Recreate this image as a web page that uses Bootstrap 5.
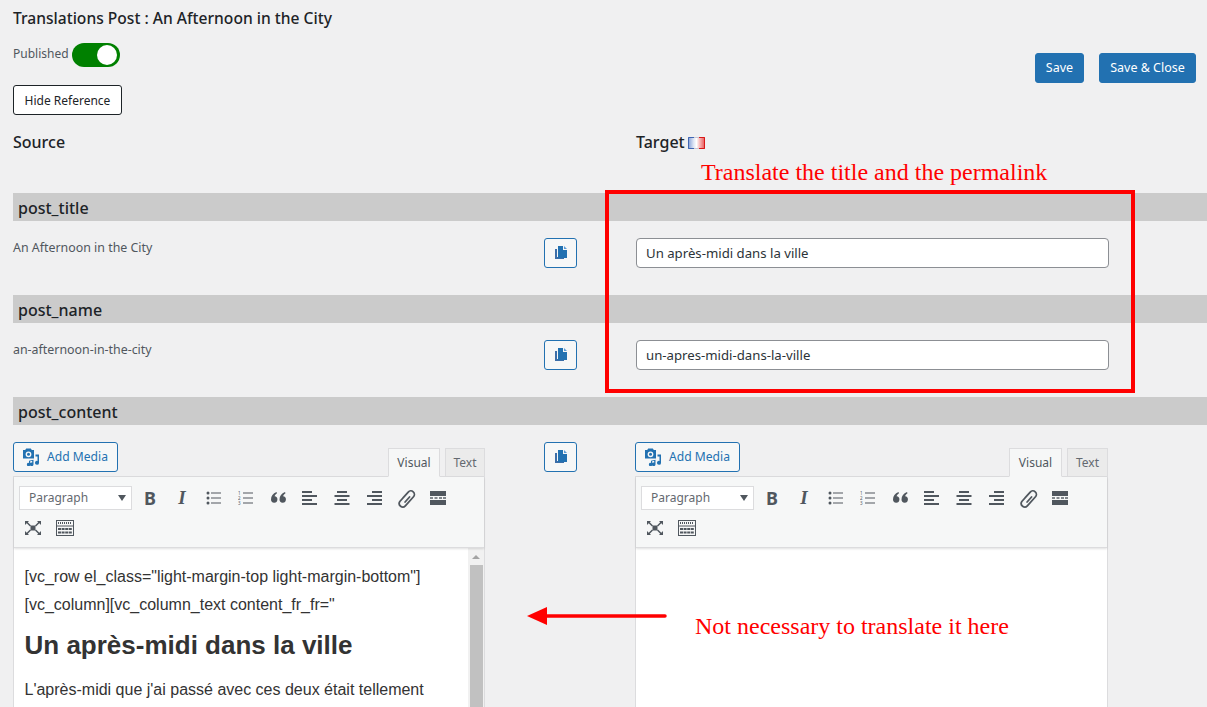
<!DOCTYPE html>
<html lang="en">
<head>
    <meta charset="UTF-8">
    <meta name="viewport" content="width=device-width, initial-scale=1.0">
    <title>Translations Post</title>
    <link href="https://cdn.jsdelivr.net/npm/bootstrap@5.3.0/dist/css/bootstrap.min.css" rel="stylesheet">
    <style>
        html, body { height: 100%; overflow: hidden; }
        body {
            background: #f0f0f1;
            color: #1d2327;
            font-family: "Noto Sans", "Open Sans", sans-serif;
            font-size: 13px;
        }
        .page-root { position: relative; height: 707px; overflow: hidden; padding: 8px 0 0 13px; }
        .page-title { font-size: 15.6px; font-weight: 500; line-height: 20px; margin: 0; }
        .pub-row { margin-top: 15px; height: 24px; color: #50575e; font-size: 12px; }
        .pub-label { margin-top: -2px; }
        .pub-toggle { width: 48px; height: 24px; padding: 2px 3px; margin-left: 3px; border-radius: 12px; background: #008000; }
        .pub-knob { width: 20px; height: 20px; border-radius: 50%; background: #fff; }
        .btn-hide { margin-top: 18px; width: 109px; height: 30px; padding: 1px 0 0; font-size: 12px; color: #1d2327; background: #fff; border: 1px solid #1d2327; border-radius: 3px; }
        .save-group { margin: 45px 11px 0 0; gap: 15px; }
        .btn-wp { height: 30px; padding: 1px 0 0; font-size: 12.5px; color: #fff; background: #2271b1; border: 1px solid #2271b1; border-radius: 3px; }
        .btn-save { width: 49px; }
        .btn-save-close { width: 97px; }
        .col-heads { margin-top: 15px; height: 24px; font-size: 16px; font-weight: 500; line-height: 24px; }
        .col-src { width: 531px; flex: none; }
        .col-copy { width: 92px; flex: none; }
        .col-tgt { width: 473px; flex: none; }
        .flag-icon { margin-left: 3px; vertical-align: -1px; }
        .field-bar { height: 28px; padding-left: 5px; background: #cbcbcb; font-size: 16px; font-weight: 500; line-height: 30px; }
        .bar-first { margin-top: 39px; }
        .field-row { height: 74px; padding-top: 17px; }
        .src-text { padding-top: 1px; font-size: 12.4px; line-height: 18px; color: #50575e; }
        .btn-copy { width: 33px; height: 30px; padding: 0; background: #f6f7f7; border: 1px solid #2271b1; border-radius: 3px; }
        .tgt-input { height: 30px; padding: 0 9px; font-size: 13.2px; color: #2c3338; border: 1px solid #8c8f94; border-radius: 4px; }
        .editor-row { padding-top: 17px; }
        .editor-head { height: 34px; }
        .btn-media { width: 105px; height: 30px; padding: 0 1px 0 0; gap: 7px; font-size: 12.1px; color: #2271b1; background: #f6f7f7; border: 1px solid #2271b1; border-radius: 3px; }
        .media-label { padding-top: 1px; }
        .pane-left { width: 472px; }
        .pane-right { width: 473px; margin-left: -1px; }
        .tab-visual, .tab-text { height: 29px; font-size: 12px; line-height: 28px; text-align: center; color: #50575e; border: 1px solid #dcdcde; }
        .tab-visual { width: 52px; background: #f6f7f7; border-bottom-color: #f6f7f7; position: relative; z-index: 1; margin-bottom: -1px; }
        .tab-text { width: 40px; margin-left: 5px; background: #ebebeb; color: #646970; margin-bottom: -1px; }
        .pane-right .tab-visual { width: 53px; }
        .pane-right .tab-text { width: 41px; }
        .editor-wrap { border: 1px solid #dcdcde; }
        .mce-bar { height: 71px; background: #f6f7f7; padding: 9px 0 0 5px; border-bottom: 1px solid #dcdcde; box-shadow: 0 1px 2px rgba(0, 0, 0, .12); position: relative; }
        .mce-select { width: 113px; height: 24px; padding: 0 5px 0 9px; font-size: 12px; color: #646970; background: #fff; border: 1px solid #dcdcde; }
        .mce-caret { width: 0; height: 0; border-left: 4px solid transparent; border-right: 4px solid transparent; border-top: 6px solid #50575e; }
        .mce-row { height: 30px; margin-top: -3px; }
        .mce-row2 { margin-left: -2px; margin-top: 0; }
        .mce-ico { width: 32px; height: 30px; flex: none; color: #50575e; }
        .gap-sel { width: 2px; flex: none; }
        .ico-b { font: 700 18px "Noto Sans", sans-serif; }
        .ico-i { font: italic 700 19px "Liberation Serif", serif; }
        .editor-body { height: 170px; background: #fff; overflow: hidden; }
        .body-text { width: 455px; padding: 15px 0 0 10.5px; font-family: "Liberation Sans", Arial, sans-serif; font-size: 16px; line-height: 28px; color: #333; }
        .body-text p { margin: 0 0 13px; }
        .body-text .intro-code { margin-bottom: 7px; }
        .body-text h2 { margin: 0 0 13px; padding-top: 1px; font-family: "Liberation Sans", Arial, sans-serif; font-size: 26px; font-weight: 700; line-height: 36px; color: #333; }
        .scroll-track { width: 16px; background: #f1f1f1; }
        .scroll-up { width: 0; height: 0; margin: 7px auto 6px; border-left: 4px solid transparent; border-right: 4px solid transparent; border-bottom: 4px solid #a3a3a3; }
        .scroll-thumb { width: 13px; height: 150px; margin: 0 auto; background: #c1c1c1; }
        .note-box { position: absolute; left: 605px; top: 190px; width: 530px; height: 203px; border: 4px solid #f00; }
        .note-text { position: absolute; font-family: "Liberation Serif", "Times New Roman", serif; font-size: 24px; line-height: 28px; color: #f00; white-space: nowrap; }
        .note-one { left: 701px; top: 158px; }
        .note-two { left: 695px; top: 612px; }
        .note-arrow { position: absolute; left: 525px; top: 604px; }
    </style>
</head>
<body>
<svg width="0" height="0" class="d-block">
    <defs>
        <symbol id="i-media" viewBox="0 0 18 18">
            <path fill="currentColor" d="M1 2h2.200l1-1.500h4.600l1 1.500H12v8.500H1zM6.500 3.400a2.900 2.900 0 1 0 0 5.800 2.900 2.900 0 0 0 0-5.800z"/>
            <circle cx="6.500" cy="6.300" r="1.500" fill="currentColor"/>
            <path fill="currentColor" d="M13.500 6.500H17v8.300a2 2 0 1 1-1.500-1.900V8.500h-2zM7 12.800l4.500-1v4.500a1.800 1.800 0 1 1-1.300-1.700v-1.500L8.300 13v3.500a1.700 1.700 0 1 1-1.300-1.600z"/>
        </symbol>
        <symbol id="i-copy" viewBox="0 0 16 16">
            <path fill="#3c6ea8" d="M2 4h2v8h7v2H2z"/>
            <path fill="#2271b1" d="M5 1h5v4h4v8H5z"/>
            <path fill="#5b9bd5" d="M11 1l3 3h-3z"/>
        </symbol>
        <symbol id="i-ul" viewBox="0 0 16 14">
            <g fill="currentColor"><circle cx="2" cy="2" r="1.500"/><circle cx="2" cy="7" r="1.500"/><circle cx="2" cy="12" r="1.500"/>
            <rect x="5" y="1.500" width="10" height="1"/><rect x="5" y="6.500" width="10" height="1"/><rect x="5" y="11.500" width="10" height="1"/></g>
        </symbol>
        <symbol id="i-ol" viewBox="0 0 16 14">
            <g fill="currentColor"><text x="0" y="4" font-size="4.500">1</text><text x="0" y="9" font-size="4.500">2</text><text x="0" y="14" font-size="4.500">3</text>
            <rect x="5" y="1.500" width="10" height="1"/><rect x="5" y="6.500" width="10" height="1"/><rect x="5" y="11.500" width="10" height="1"/></g>
        </symbol>
        <symbol id="i-quote" viewBox="0 0 16 14">
            <path fill="currentColor" d="M6.500 1C3 2.500 1 5 1 8.500a3.200 3.200 0 1 0 3.600-3.200c.3-1.200 1-2 2.400-3zM15 1c-3.500 1.500-5.500 4-5.500 7.500a3.200 3.200 0 1 0 3.600-3.200c.3-1.200 1-2 2.400-3z"/>
        </symbol>
        <symbol id="i-left" viewBox="0 0 16 14">
            <g fill="currentColor"><rect y="0" width="10" height="2"/><rect y="4" width="15" height="2"/><rect y="8" width="10" height="2"/><rect y="12" width="15" height="2"/></g>
        </symbol>
        <symbol id="i-center" viewBox="0 0 16 14">
            <g fill="currentColor"><rect x="3" y="0" width="10" height="2"/><rect x=".5" y="4" width="15" height="2"/><rect x="3" y="8" width="10" height="2"/><rect x=".5" y="12" width="15" height="2"/></g>
        </symbol>
        <symbol id="i-right" viewBox="0 0 16 14">
            <g fill="currentColor"><rect x="6" y="0" width="10" height="2"/><rect x="1" y="4" width="15" height="2"/><rect x="6" y="8" width="10" height="2"/><rect x="1" y="12" width="15" height="2"/></g>
        </symbol>
        <symbol id="i-link" viewBox="0 0 18 18">
            <path fill="none" stroke="currentColor" stroke-width="1.500" stroke-linecap="round" d="M6 8.500l4.500-5a3 3 0 0 1 4.500 4l-7 7.800a3 3 0 0 1-4.700-3.700l6.800-7.600M7.800 12l3.800-4.300"/>
        </symbol>
        <symbol id="i-more" viewBox="0 0 16 14">
            <g fill="currentColor"><rect width="16" height="5"/><rect y="9" width="16" height="5"/><rect y="6.300" width="3" height="1.400"/><rect x="4.500" y="6.300" width="3" height="1.400"/><rect x="9" y="6.300" width="3" height="1.400"/><rect x="13" y="6.300" width="3" height="1.400"/></g>
        </symbol>
        <symbol id="i-full" viewBox="0 0 18 16">
            <g fill="currentColor"><rect x="6.500" y="5.500" width="5" height="5"/><path d="M1 1h4L3.800 2.200 7 5.500 6 6.500 2.700 3.300 1 5zM17 1h-4l1.200 1.200L11 5.500l1 1 3.300-3.200L17 5zM1 15h4l-1.200-1.200L7 10.500l-1-1-3.300 3.200L1 11zM17 15h-4l1.200-1.200L11 10.500l1-1 3.300 3.200L17 11z"/></g>
        </symbol>
        <symbol id="i-keys" viewBox="0 0 18 16">
            <rect x=".5" y=".5" width="17" height="15" fill="none" stroke="currentColor"/>
            <path d="M2 3h14" stroke="currentColor" stroke-width="2" stroke-dasharray="1 1"/>
            <rect x="1" y="5.500" width="16" height="1" fill="currentColor"/>
            <path d="M2 9h14M2 12.500h14" stroke="currentColor" stroke-width="2.200" stroke-dasharray="3 .6"/>
        </symbol>
    </defs>
</svg>

<div class="page-root">
    <div class="d-flex justify-content-between align-items-start">
        <div>
            <h1 class="page-title">Translations Post : An Afternoon in the City</h1>
            <div class="pub-row d-flex align-items-center"><span class="pub-label">Published</span>
                <span class="pub-toggle d-flex justify-content-end"><span class="pub-knob"></span></span>
            </div>
            <button class="btn btn-hide">Hide Reference</button>
        </div>
        <div class="save-group d-flex">
            <button class="btn btn-wp btn-save">Save</button>
            <button class="btn btn-wp btn-save-close">Save &amp; Close</button>
        </div>
    </div>

    <div class="col-heads d-flex">
        <div class="col-src">Source</div>
        <div class="col-copy"></div>
        <div class="col-tgt">Target<svg class="flag-icon" width="17" height="12" viewBox="0 0 17 12"><defs><linearGradient id="flag-fill" x1="0" x2="1" y1="0" y2="0"><stop offset="0" stop-color="#7f9bd6"/><stop offset=".33" stop-color="#dfe6f4"/><stop offset=".5" stop-color="#fff"/><stop offset=".66" stop-color="#f8c4c4"/><stop offset="1" stop-color="#e85050"/></linearGradient></defs><rect width="17" height="12" fill="url(#flag-fill)"/><path d="M6 .5H.5v11H6" fill="none" stroke="#3f66b3"/><path d="M11 .5h5.500v11H11" fill="none" stroke="#d81818"/><path d="M6 .5h5M6 11.500h5" stroke="#c9c9d4"/></svg></div>
    </div>

    <div class="field-bar bar-first">post_title</div>
    <div class="field-row d-flex">
        <div class="col-src src-text">An Afternoon in the City</div>
        <div class="col-copy"><button class="btn btn-copy d-flex align-items-center justify-content-center"><svg width="16" height="16"><use href="#i-copy"/></svg></button></div>
        <div class="col-tgt"><input type="text" class="form-control tgt-input" value="Un après-midi dans la ville"></div>
    </div>

    <div class="field-bar">post_name</div>
    <div class="field-row d-flex">
        <div class="col-src src-text">an-afternoon-in-the-city</div>
        <div class="col-copy"><button class="btn btn-copy d-flex align-items-center justify-content-center"><svg width="16" height="16"><use href="#i-copy"/></svg></button></div>
        <div class="col-tgt"><input type="text" class="form-control tgt-input" value="un-apres-midi-dans-la-ville"></div>
    </div>

    <div class="field-bar">post_content</div>
    <div class="editor-row d-flex">
        <div class="col-src">
            <div class="pane-left" data-side="left"></div>
        </div>
        <div class="col-copy"><button class="btn btn-copy d-flex align-items-center justify-content-center"><svg width="16" height="16"><use href="#i-copy"/></svg></button></div>
        <div class="col-tgt">
            <div class="pane-right" data-side="right"></div>
        </div>
    </div>

    <div class="note-box"></div>
    <div class="note-text note-one">Translate the title and the permalink</div>
    <div class="note-text note-two">Not necessary to translate it here</div>
    <svg class="note-arrow" width="142" height="24" viewBox="0 0 142 24"><path d="M21 12h119" stroke="#f00" stroke-width="3.500" stroke-linecap="round"/><path d="M2 12l20-9v18z" fill="#f00"/></svg>
</div>

<script>
    // both editors share the same toolbar markup
    const row1 = ['ul', 'ol', 'quote', 'left', 'center', 'right', 'link', 'more'];
    const sizes = { ul: [16, 14], ol: [16, 14], quote: [16, 14], left: [16, 14], center: [16, 14], right: [16, 14], link: [21, 21], more: [16, 14], full: [18, 16], keys: [18, 16] };

    function mceIcon(name) {
        const [w, h] = sizes[name];
        return `<span class="mce-ico d-flex align-items-center justify-content-center"><svg width="${w}" height="${h}"><use href="#i-${name}"/></svg></span>`;
    }

    const leftBody = `
        <div class="editor-body d-flex justify-content-between">
            <div class="body-text">
                <p class="intro-code">[vc_row el_class="light-margin-top light-margin-bottom"][vc_column][vc_column_text content_fr_fr="</p>
                <h2>Un après-midi dans la ville</h2>
                <p>L'après-midi que j'ai passé avec ces deux était tellement</p>
            </div>
            <div class="scroll-track"><div class="scroll-up"></div><div class="scroll-thumb"></div></div>
        </div>`;

    document.querySelectorAll('[data-side]').forEach(pane => {
        const isLeft = pane.dataset.side === 'left';
        pane.innerHTML = `
            <div class="editor-head d-flex justify-content-between align-items-start">
                <button class="btn btn-media d-flex align-items-center justify-content-center"><svg width="18" height="18"><use href="#i-media"/></svg><span class="media-label">Add Media</span></button>
                <div class="d-flex align-self-end">
                    <div class="tab-visual">Visual</div>
                    <div class="tab-text">Text</div>
                </div>
            </div>
            <div class="editor-wrap">
                <div class="mce-bar">
                    <div class="d-flex align-items-center mce-row">
                        <div class="mce-select d-flex align-items-center justify-content-between">Paragraph<span class="mce-caret"></span></div>
                        <span class="gap-sel"></span>
                        <span class="mce-ico d-flex align-items-center justify-content-center ico-b">B</span>
                        <span class="mce-ico d-flex align-items-center justify-content-center ico-i">I</span>
                        ${row1.map(mceIcon).join('')}
                    </div>
                    <div class="d-flex align-items-center mce-row mce-row2">${mceIcon('full')}${mceIcon('keys')}</div>
                </div>
                ${isLeft ? leftBody : '<div class="editor-body"></div>'}
            </div>`;
    });
</script>
</body>
</html>
